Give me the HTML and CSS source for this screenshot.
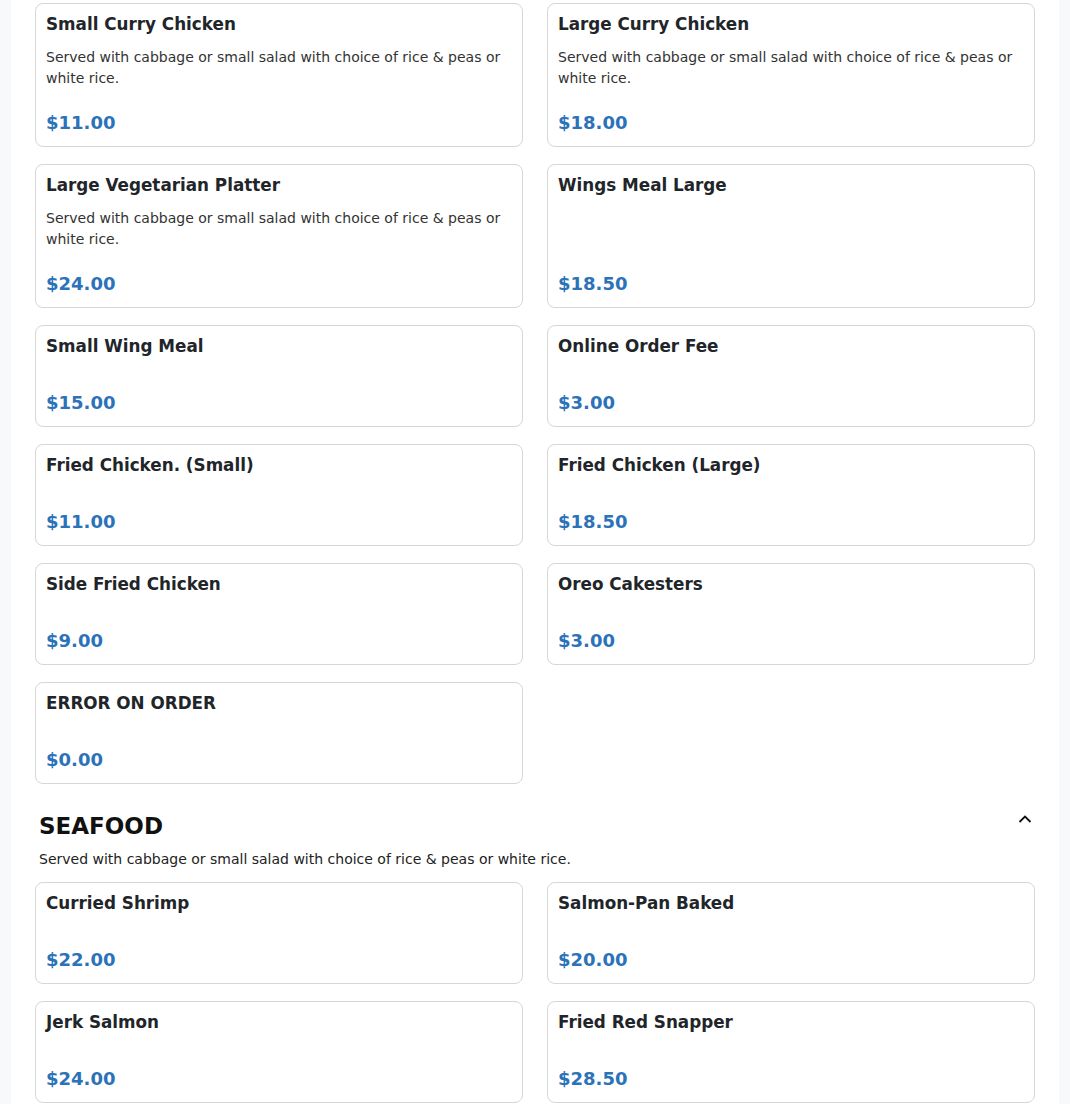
FILE: index.html
```html
<!DOCTYPE html>
<html>
<head>
<meta charset="utf-8">
<link rel="stylesheet" href="styles.css">
</head>
<body>
<div class="page">
  <div class="grid">
    <div class="card"><div class="title">Small Curry Chicken</div><div class="desc">Served with cabbage or small salad with choice of rice &amp; peas or white rice.</div><div class="price">$11.00</div></div>
    <div class="card"><div class="title">Large Curry Chicken</div><div class="desc">Served with cabbage or small salad with choice of rice &amp; peas or white rice.</div><div class="price">$18.00</div></div>
    <div class="card"><div class="title">Large Vegetarian Platter</div><div class="desc">Served with cabbage or small salad with choice of rice &amp; peas or white rice.</div><div class="price">$24.00</div></div>
    <div class="card"><div class="title">Wings Meal Large</div><div class="price">$18.50</div></div>
    <div class="card"><div class="title">Small Wing Meal</div><div class="price">$15.00</div></div>
    <div class="card"><div class="title">Online Order Fee</div><div class="price">$3.00</div></div>
    <div class="card"><div class="title">Fried Chicken. (Small)</div><div class="price">$11.00</div></div>
    <div class="card"><div class="title">Fried Chicken (Large)</div><div class="price">$18.50</div></div>
    <div class="card"><div class="title">Side Fried Chicken</div><div class="price">$9.00</div></div>
    <div class="card"><div class="title">Oreo Cakesters</div><div class="price">$3.00</div></div>
    <div class="card"><div class="title">ERROR ON ORDER</div><div class="price">$0.00</div></div>
  </div>

  <div class="section-head">
    <h2 class="section-title">SEAFOOD</h2>
    <svg class="chevron" width="14" height="10" viewBox="0 0 14 10"><path d="M1.5 8 L7 2.5 L12.5 8" fill="none" stroke="#111" stroke-width="1.8"/></svg>
  </div>
  <p class="section-desc">Served with cabbage or small salad with choice of rice &amp; peas or white rice.</p>

  <div class="grid">
    <div class="card"><div class="title">Curried Shrimp</div><div class="price">$22.00</div></div>
    <div class="card"><div class="title">Salmon-Pan Baked</div><div class="price">$20.00</div></div>
    <div class="card"><div class="title">Jerk Salmon</div><div class="price">$24.00</div></div>
    <div class="card"><div class="title">Fried Red Snapper</div><div class="price">$28.50</div></div>
  </div>
</div>
</body>
</html>
```
FILE: styles.css
```css
html, body {
  margin: 0;
  padding: 0;
  background: #f8f9fa;
  font-family: "DejaVu Sans", sans-serif;
  color: #212529;
}
.page {
  margin: 0 11px;
  background: #ffffff;
  padding: 3px 24px 40px;
  min-height: 1200px;
}
.grid {
  display: grid;
  grid-template-columns: 1fr 1fr;
  column-gap: 24px;
  row-gap: 17px;
}
.card {
  border: 1px solid #d6d6d6;
  border-radius: 8px;
  padding: 10px 10px 12px;
  display: flex;
  flex-direction: column;
}
.title {
  font-size: 16.8px;
  font-weight: bold;
  line-height: 20px;
  margin-bottom: 13px;
  color: #212529;
}
.desc {
  font-size: 14px;
  line-height: 21px;
  color: #333;
}
.price {
  margin-top: auto;
  padding-top: 23px;
  font-size: 18px;
  font-weight: bold;
  line-height: 22px;
  color: #2b72b9;
}
.section-head {
  display: flex;
  justify-content: space-between;
  align-items: flex-start;
  margin-top: 27px;
  padding: 0 4px;
}
.section-title {
  margin: 0;
  font-size: 23px;
  line-height: 30px;
  font-weight: bold;
  color: #111;
}
.chevron {
  margin-top: 3px;
  margin-right: -1px;
}
.section-desc {
  margin: 8px 0 13px;
  padding: 0 4px;
  font-size: 14px;
  line-height: 20px;
  color: #222;
}
```
